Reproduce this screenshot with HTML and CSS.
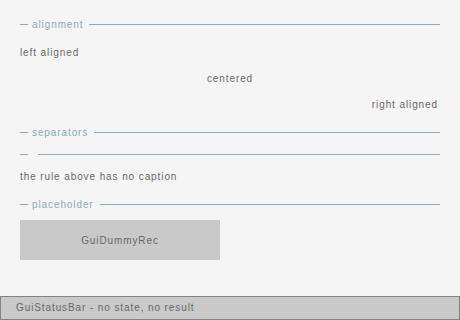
FILE: index.html
```html
<!DOCTYPE html>
<html lang="en">
<head>
  <meta charset="UTF-8">
  <meta name="viewport" content="width=device-width, initial-scale=1.0">
  <title>Layout</title>
  <link rel="stylesheet" href="styles.css">
</head>
<body>
  <div class="content">
    <div class="separator first">
      <span class="dash"></span>
      <span class="caption">alignment</span>
      <span class="rule"></span>
    </div>
    <div class="row left">left aligned</div>
    <div class="row center">centered</div>
    <div class="row right">right aligned</div>

    <div class="separator gap-lg">
      <span class="dash"></span>
      <span class="caption">separators</span>
      <span class="rule"></span>
    </div>
    <div class="separator gap-sm">
      <span class="dash"></span>
      <span class="caption"></span>
      <span class="rule"></span>
    </div>
    <div class="row left gap-sm">the rule above has no caption</div>

    <div class="separator gap-lg">
      <span class="dash"></span>
      <span class="caption">placeholder</span>
      <span class="rule"></span>
    </div>
    <div class="dummy">GuiDummyRec</div>
  </div>

  <div class="status-bar">GuiStatusBar - no state, no result</div>
</body>
</html>
```

FILE: styles.css
```css
body {
  margin: 0;
  height: 320px;
  background-color: #f5f5f5;
  color: #686868;
  font-family: "Liberation Sans", Arial, sans-serif;
  font-size: 10px;
  letter-spacing: 0.9px;
  display: flex;
  flex-direction: column;
  overflow: hidden;
}

.content {
  padding: 0 20px;
  display: flex;
  flex-direction: column;
}

.separator {
  height: 20px;
  display: flex;
  align-items: center;
  color: #8eaab6;
}

.separator.first {
  margin-top: 14px;
}

.dash {
  width: 8px;
  height: 1px;
  background-color: #90abb5;
  margin-right: 4px;
}

.caption {
  margin-right: 6px;
}

.rule {
  flex: 1;
  height: 1px;
  background-color: #90abb5;
}

.row {
  height: 20px;
  line-height: 22px;
  margin-top: 6px;
}

.row.left {
  text-align: left;
  margin-top: 8px;
}

.row.center {
  text-align: center;
}

.row.right {
  text-align: right;
  padding-right: 2px;
}

.gap-lg {
  margin-top: 8px;
}

.gap-sm,
.row.left.gap-sm {
  margin-top: 2px;
}

.dummy {
  margin-top: 6px;
  width: 200px;
  height: 40px;
  background-color: #c9c9c9;
  display: flex;
  align-items: center;
  justify-content: center;
}

.status-bar {
  margin-top: auto;
  height: 22px;
  line-height: 22px;
  border: 1px solid #838383;
  background-color: #c9c9c9;
  padding-left: 15px;
}
```
